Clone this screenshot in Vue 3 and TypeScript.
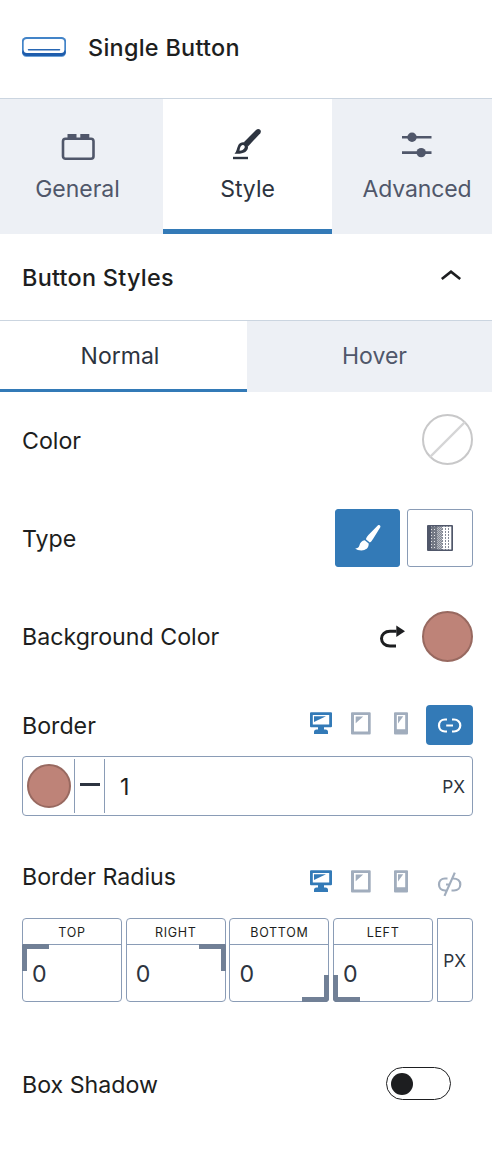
<script setup lang="ts">
import { ref } from 'vue'

interface Side {
  name: string
  corner: string
  value: number
}

const sides = ref<Side[]>([
  { name: 'TOP', corner: 'tl', value: 0 },
  { name: 'RIGHT', corner: 'tr', value: 0 },
  { name: 'BOTTOM', corner: 'br', value: 0 },
  { name: 'LEFT', corner: 'bl', value: 0 },
])
const state = ref<'normal' | 'hover'>('normal')
const borderWidth = ref(1)
const shadow = ref(false)
</script>

<template>
  <div class="panel">
    <header class="head">
      <svg class="block-icon" width="44" height="20" viewBox="0 0 44 20" fill="none">
        <rect x="0" y="1" width="44" height="19" rx="4.5" fill="#6fa3d8" />
        <rect x="0" y="1" width="44" height="18" rx="4.5" fill="#1f5dac" />
        <rect x="0" y="0" width="44" height="17" rx="4.5" fill="#4384c8" />
        <path d="M1 13.500h42v2q0 2.500-3 2.500H4q-3 0-3-2.500Z" fill="#1f5dac" />
        <rect x="1.700" y="1.900" width="40.600" height="14" rx="3.200" fill="#fff" />
        <path d="M6.500 12.800H37.500" stroke="#2867b4" stroke-width="1.500" stroke-linecap="round" />
      </svg>
      <span class="title">Single Button</span>
    </header>

    <nav class="tabs">
      <div class="tab general">
        <svg width="36" height="32" viewBox="0 0 36 32">
          <path d="M7.500 3h9v4.500h-9zM20.300 3h9v4.500h-9z" fill="#50576a" />
          <rect x="3" y="7.800" width="30.500" height="20" rx="2.500" fill="none" stroke="#50576a" stroke-width="2.600" />
        </svg>
        <span>General</span>
      </div>
      <div class="tab active style-tab">
        <svg width="36" height="32" viewBox="0 0 36 32" overflow="visible">
          <path d="M3 27H18" stroke="#2d3440" stroke-width="2.400" />
          <path d="M4.500 22.800C6.700 20.800 6.800 17.300 8.500 13.800c1.500-2.800 6-3.500 8.300-.9 2.600 3.100.7 7.200-2.600 8.500-3 1.200-6 1.400-9.700 1.400Z" fill="#2d3440" />
          <path d="M9.500 19.800c.3-2.800 1-5.300 3.100-5.700 1.800-.2 2.600 1.500 1.900 3-.8 1.700-2.600 2.500-5 2.700Z" fill="#fff" />
          <path d="M13.800 11.300 26.300-1.300c2.500-2.200 6 .8 4 3.500L18 15.500Z" fill="#2d3440" />
        </svg>
        <span>Style</span>
      </div>
      <div class="tab advanced">
        <svg width="36" height="32" viewBox="0 0 36 32" fill="#50576a">
          <path d="M3 6.200H32.500M3 21.600H32.500" stroke="#50576a" stroke-width="2.600" />
          <circle cx="13" cy="6.200" r="4.700" /><circle cx="22.200" cy="21.600" r="4.700" />
        </svg>
        <span>Advanced</span>
      </div>
    </nav>

    <div class="section">
      <span class="title">Button Styles</span>
      <svg width="22" height="14" viewBox="0 0 22 14">
        <path d="M1.800 11 11 3.700l9.200 7.300" fill="none" stroke="#1d1e20" stroke-width="2.600" />
      </svg>
    </div>

    <div class="states">
      <div :class="['state', { on: state === 'normal' }]" @click="state = 'normal'">Normal</div>
      <div :class="['state', { on: state === 'hover' }]" @click="state = 'hover'">Hover</div>
    </div>

    <div class="row color-row">
      <span class="name">Color</span>
      <svg width="51" height="51" viewBox="0 0 51 51" fill="none">
        <circle cx="25.500" cy="25.500" r="24.500" stroke="#c8c8c9" stroke-width="2" />
        <path d="M8 43 43 8" stroke="#d5d5d6" stroke-width="2.400" />
      </svg>
    </div>

    <div class="row type-row">
      <span class="name">Type</span>
      <div class="types">
        <button class="type chosen">
          <svg width="28" height="28" viewBox="0 0 28 28" fill="#fff">
            <path d="M24 1.300c1.500-.9 3 .4 2.300 2L19 15c-.9 1.500-2.100 3-3.200 3.600l-3.900-3.300c.3-1.500 1.500-3.300 2.500-4.300Z" />
            <path d="M10.800 16.200 14.700 19.600c.3 4.600-3.200 6.800-7.200 6.800-2.600 0-5-.6-6.300-1.900 2.200-.1 3.500-.6 4.100-2.700.8-3.400 2.500-5.100 5.500-5.600Z" />
          </svg>
        </button>
        <button class="type">
          <svg width="26" height="26" viewBox="0 0 26 26">
            <defs>
              <pattern id="dotsA" width="3" height="3" patternUnits="userSpaceOnUse"><rect width="3" height="3" fill="#737884" /><path d="M1 1h1v1h-1z" fill="#e3e4e6" /></pattern>
              <pattern id="dotsB" width="2" height="2" patternUnits="userSpaceOnUse"><rect width="2" height="2" fill="#b7bac0" /><path d="M0 0h1v1h-1zM1 1h1v1h-1z" fill="#858a96" /></pattern>
              <pattern id="dotsC" width="3" height="3" patternUnits="userSpaceOnUse"><rect width="3" height="3" fill="#fff" /><path d="M0 0h1v2h-1z" fill="#858a96" /></pattern>
            </defs>
            <rect width="26" height="26" rx="1" fill="#50576a" />
            <path d="M4 1.500h6v23H4z" fill="url(#dotsA)" />
            <path d="M10 1.500h5v23h-5z" fill="url(#dotsB)" />
            <path d="M15 1.500h7v23h-7z" fill="url(#dotsC)" />
            <path d="M22 1.500h2.300v23H22z" fill="#fff" />
          </svg>
        </button>
      </div>
    </div>

    <div class="row color-row">
      <span class="name bg-name">Background Color</span>
      <div class="picker">
        <svg width="26" height="24" viewBox="0 0 26 24">
          <path d="M17 21H11C6 21 2.500 17.800 2.500 13.600S6 6.300 11 6.300H17.500" fill="none" stroke="#1d1e20" stroke-width="3" />
          <path d="M17.300.5 26 6.200 17.300 12Z" fill="#1d1e20" />
        </svg>
        <span class="swatch"></span>
      </div>
    </div>

    <div v-for="group in ['Border', 'Border Radius']" :key="group" :class="['group', { radius: group !== 'Border' }]">
      <div class="group-head">
        <span class="label">{{ group }}</span>
        <div class="devices">
          <svg class="desktop" width="22" height="23" viewBox="0 0 22 23" fill="#337ab7">
            <path fill-rule="evenodd" d="M1 .3h20q1 0 1 1v13q0 1-1 1h-7v2.200h1.500q2.500 0 2.500 2.500v2H4v-2q0-2.500 2.500-2.500H8v-2.200H1q-1 0-1-1v-13q0-1 1-1ZM2.800 3v9.400h16.400V3Z" />
            <path d="M4 4.200h12L4 10Z" />
          </svg>
          <svg class="tablet" width="20" height="23" viewBox="0 0 20 23" fill="#a1adbd">
            <path fill-rule="evenodd" d="M1 .3h17.700q1 0 1 1v20.200q0 1-1 1H1q-1 0-1-1V1.300q0-1 1-1ZM3 3v16.500h14V3Z" />
            <path d="M4.700 4.500h7.500l-7.500 6.800Z" />
          </svg>
          <svg class="phone" width="14" height="23" viewBox="0 0 14 23" fill="#a1adbd">
            <path fill-rule="evenodd" d="M1 .3h12q1 0 1 1v20.200q0 1-1 1H1q-1 0-1-1V1.300q0-1 1-1ZM2.800 3v14.200h8.400V3Z" />
            <path d="M4 4.300h5.200L4 11.500Z" />
          </svg>
        </div>
        <div class="link">
          <svg width="26" height="26" viewBox="0 0 26 26" fill="none" stroke-width="2.200">
            <path v-if="group === 'Border'" d="M10 7.500H8C4.300 7.500 2 10.300 2 13.500s2.300 6 6 6H10M15 7.500h2c3.700 0 6.300 2.800 6.300 6s-2.600 6-6.300 6H15M9.200 13.500h6.800" />
            <path v-else d="M10.500 7.500H8C4.300 7.500 2 10.300 2 13.500s2.300 6 6 6H9.500M16 7.500c4.500 0 7.300 2.500 7.300 6s-2.600 6-6.300 6H14.500M9 13.500h3.600M17.800 1.600 7.500 24.900" />
          </svg>
        </div>
      </div>

      <div v-if="group === 'Border'" class="border-box">
        <div class="cell swatch-cell"><span class="swatch small"></span></div>
        <div class="cell line-cell"><i></i></div>
        <div class="amount">{{ borderWidth }}</div>
        <div class="unit">PX</div>
      </div>
      <div v-else class="corners">
        <div v-for="side in sides" :key="side.name" class="side">
          <div class="side-name">{{ side.name }}</div>
          <div class="side-value">{{ side.value }}</div>
          <i :class="['corner', side.corner]"></i>
        </div>
        <div class="corner-unit">PX</div>
      </div>
    </div>

    <div class="row shadow-row">
      <span class="name">Box Shadow</span>
      <div :class="['toggle', { enabled: shadow }]" @click="shadow = !shadow"><i></i></div>
    </div>
  </div>
</template>

<style>
body { background: #fff; }
</style>

<style scoped>
* { box-sizing: border-box; }
svg { display: block; flex: none; }
.panel {
  width: 492px;
  height: 1156px;
  overflow: hidden;
  background: #fff;
  color: #1d1e20;
  font-family: Inter, "Liberation Sans", sans-serif;
  font-size: 23.2px;
  line-height: 30px;
}
.head {
  height: 99px;
  padding: 0 22px 4px;
  border-bottom: 1px solid #cbd5e0;
  display: flex;
  align-items: center;
  gap: 22px;
}
.title { font-weight: 500; font-size: 23.4px; letter-spacing: .28px; padding-top: 2px; }
.block-icon { margin-bottom: 1px; }
.tabs { display: grid; grid-template-columns: 163px 169px 160px; height: 135px; }
.tab {
  display: flex;
  flex-direction: column;
  align-items: center;
  gap: 11px;
  padding-top: 32px;
  background: #edf0f5;
  color: #50576a;
  font-size: 23px;
}
.general { padding-right: 8px; }
.advanced { padding-left: 10px; letter-spacing: -.1px; }
.tab.active { background: #fff; color: #2d3440; border-bottom: 5px solid #337ab7; }
.section {
  height: 87px;
  padding: 0 30px 0 22px;
  border-bottom: 1px solid #cbd5e0;
  display: flex;
  align-items: center;
  justify-content: space-between;
}
.section svg { margin-bottom: 5px; }
.states { display: grid; grid-template-columns: 247px 245px; height: 71px; }
.state {
  padding-top: 20px;
  padding-left: 10px;
  text-align: center;
  font-size: 23px;
  color: #50576a;
  background: #edf0f5;
}
.state.on { padding-left: 0; padding-right: 7px; background: #fff; color: #2d3440; border-bottom: 3px solid #337ab7; }
.row { display: flex; align-items: center; justify-content: space-between; padding: 0 19px 0 22px; }
.name { padding-top: 2px; }
.bg-name { padding-top: 0; }
.color-row { height: 95px; }
.type-row { height: 102px; }
.types { display: flex; gap: 7px; }
.type {
  width: 66px;
  height: 58px;
  padding: 0;
  display: grid;
  place-items: center;
  background: #fff;
  border: 1px solid #8a9cb6;
  border-radius: 3px;
}
.type.chosen { width: 65px; background: #337ab7; border-color: #337ab7; }
.picker { display: flex; align-items: center; gap: 17px; }
.swatch { width: 51px; height: 51px; border-radius: 50%; background: #be8378; border: 2px solid #986960; }
.group { padding: 21px 19px 0 22px; height: 172px; }
.group.radius { height: 186px; padding-top: 8px; }
.group-head { display: flex; align-items: flex-start; height: 51px; }
.radius .group-head { height: 54px; }
.label { margin-top: 6px; flex: 1; }
.radius .label { margin-top: -2px; }
.devices { display: flex; margin-top: 7px; margin-right: 18px; }
.radius .devices { margin-top: 6px; }
.tablet { margin-left: 19px; }
.phone { margin-left: 23px; }
.link {
  width: 47px;
  height: 40px;
  display: grid;
  place-items: center;
  border-radius: 4px;
  background: #337ab7;
  stroke: #fff;
}
.radius .link { background: none; stroke: #a1adbd; }
.border-box {
  height: 60px;
  display: flex;
  align-items: center;
  border: 1px solid #8a9cb6;
  border-radius: 4px;
}
.cell { height: 54px; display: grid; place-items: center; border-right: 1px solid #8a9cb6; }
.swatch-cell { width: 52px; }
.swatch.small { width: 44px; height: 44px; }
.line-cell { width: 30px; }
.line-cell i { width: 20px; height: 3px; margin-bottom: 3px; background: #2d3440; }
.amount { flex: 1; padding: 2px 0 0 15px; }
.unit { padding: 2px 7px 0 0; font-size: 17.3px; color: #2d3440; }
.corners { display: grid; grid-template-columns: 100px 100px 100px 100px 36px; column-gap: 3.7px; }
.side { position: relative; height: 84px; border: 1px solid #8a9cb6; border-radius: 4px; }
.side-name {
  height: 26px;
  border-bottom: 1px solid #8a9cb6;
  text-align: center;
  font-size: 12.5px;
  line-height: 27px;
  letter-spacing: .7px;
}
.side-value { padding: 14px 0 0 9px; color: #2d3440; }
.corner { position: absolute; width: 27px; height: 27px; border: 0 solid #718096; }
.tl { left: -1px; top: 25px; border-width: 5px 0 0 5px; border-top-left-radius: 2px; }
.tr { right: -1px; top: 25px; border-width: 5px 5px 0 0; border-top-right-radius: 2px; }
.br { right: -1px; bottom: -1px; border-width: 0 5px 5px 0; border-bottom-right-radius: 4px; }
.bl { left: -1px; bottom: -1px; border-width: 0 0 5px 5px; border-bottom-left-radius: 4px; }
.corner-unit {
  display: grid;
  place-items: center;
  padding-top: 2px;
  border: 1px solid #8a9cb6;
  border-radius: 0 4px 4px 0;
  font-size: 17.3px;
  color: #2d3440;
}
.shadow-row { height: 83px; padding-right: 41px; }
.toggle { width: 65px; height: 33px; padding: 4px; border: 1px solid #1d1e20; border-radius: 17px; display: flex; align-items: center; }
.toggle.enabled { justify-content: flex-end; }
.toggle i { width: 22px; height: 22px; border-radius: 50%; background: #1d1e20; }
</style>
